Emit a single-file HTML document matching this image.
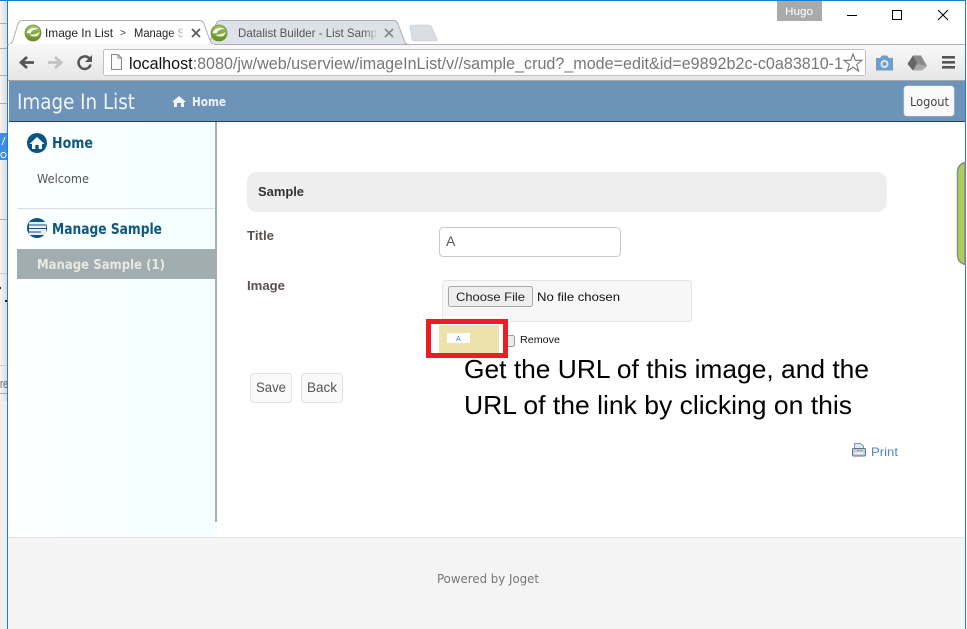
<!DOCTYPE html>
<html>
<head>
<meta charset="utf-8">
<title>Image In List</title>
<style>
html,body{margin:0;padding:0;background:#fff;width:967px;height:629px;overflow:hidden}
svg{display:block}
text{font-family:"Liberation Sans",sans-serif;white-space:pre}
.d{font-family:"DejaVu Sans",sans-serif}
</style>
</head>
<body>
<svg width="967" height="629" viewBox="0 0 967 629" xmlns="http://www.w3.org/2000/svg">
<defs>
<linearGradient id="strip" x1="0" x2="1" y1="0" y2="0"><stop offset="0" stop-color="#f6f6f6"/><stop offset="1" stop-color="#d8d8d8"/></linearGradient>
<linearGradient id="tool" x1="0" x2="0" y1="0" y2="1"><stop offset="0" stop-color="#f8f8f8"/><stop offset="1" stop-color="#e6e6e6"/></linearGradient>
<linearGradient id="side" x1="0" x2="1" y1="0" y2="0"><stop offset="0" stop-color="#ffffff"/><stop offset=".3" stop-color="#f8ffff"/><stop offset="1" stop-color="#f5ffff"/></linearGradient>
<linearGradient id="fade" x1="0" x2="1" y1="0" y2="0"><stop offset="0" stop-color="#fff" stop-opacity="0"/><stop offset="1" stop-color="#fff"/></linearGradient>
<linearGradient id="fade2" x1="0" x2="1" y1="0" y2="0"><stop offset="0" stop-color="#dde1e8" stop-opacity="0"/><stop offset="1" stop-color="#dde1e8"/></linearGradient>
<linearGradient id="fav" x1="0" x2="0" y1="0" y2="1"><stop offset="0" stop-color="#a9c46a"/><stop offset="1" stop-color="#5f8f1e"/></linearGradient>
<clipPath id="c1"><rect x="45" y="22" width="138" height="20"/></clipPath>
<clipPath id="c2"><rect x="238" y="22" width="138" height="20"/></clipPath>
</defs>

<!-- left desktop strip -->
<rect x="0" y="0" width="8" height="629" fill="url(#strip)"/>
<g fill="#ababab">
<rect x="0" y="23" width="7" height="1"/><rect x="0" y="48" width="7" height="1"/><rect x="0" y="75" width="7" height="1"/><rect x="0" y="103" width="7" height="1"/>
<rect x="0" y="219" width="7" height="1"/><rect x="0" y="273" width="7" height="1" fill="#ccc"/><rect x="0" y="365" width="7" height="1" fill="#ccc"/><rect x="0" y="393" width="7" height="1"/>
</g>
<rect x="0" y="133" width="7" height="27" fill="#3a8ee6"/>
<path d="M2 145L5 137" stroke="#fff" stroke-width="1" fill="none"/>
<circle cx="3.500" cy="155" r="2.600" stroke="#fff" stroke-width="1" fill="none"/>
<rect x="0" y="287" width="1" height="2" fill="#222"/>
<rect x="5" y="300" width="2" height="2" fill="#222"/>
<text x="0" y="388" font-size="13" fill="#666" textLength="8" lengthAdjust="spacingAndGlyphs">re</text>
<rect x="0" y="401" width="7" height="228" fill="#efefef"/>

<!-- window -->
<rect x="8" y="0" width="959" height="629" fill="#fff"/>
<rect x="0" y="0" width="967" height="1" fill="#1a7fd0"/>
<rect x="7" y="0" width="1" height="629" fill="#1a7fd0"/>
<rect x="965" y="0" width="1" height="629" fill="#1a7fd0"/>
<rect x="966" y="0" width="1" height="629" fill="#fff"/>

<!-- tabstrip -->
<rect x="8" y="44" width="957" height="1" fill="#b4b4b4"/>
<path d="M205 44.500C209 44.500 210 42 212 36L216 24C217 21.500 218 20.500 221 20.500L393 20.500C396 20.500 397 21.500 398 24L404 40C405 43 406 44.500 409 44.500Z" fill="#dde1e8" stroke="#a9acb2"/>
<path d="M8 44.500C11 44.500 12 43 13 40L18 24C19 21.500 20 20.500 23 20.500L199 20.500C202 20.500 203 21.500 204 24L210 40C211 43 212 44.500 215 44.500L215 45L8 45Z" fill="#fff" stroke="#a9acb2"/>
<rect x="9" y="44" width="205" height="2" fill="#f8f8f8"/>
<path d="M410 27C410 25.500 411 25 412 25L428 25C430 25 431 26 431.500 27L437 39C437.500 40.500 437 41 435 41L415 41C413 41 412 40.500 412 39Z" fill="#d9dde4" stroke="#c4c7cc" stroke-width=".6"/>

<!-- favicons -->
<g>
<circle cx="33" cy="33" r="8" fill="url(#fav)" stroke="#6b8a3a" stroke-width=".8"/>
<path d="M26.500 33C28 28.500 34 26.500 38.500 29C34.500 29 31.500 30.500 30.500 33.500Z" fill="#fff"/>
<path d="M29.500 34.500C33 35 36 34 40 32C39 33.500 38.500 35 37.500 36C34 37 31 36.500 29.500 34.500Z" fill="#f2f7e2"/>
</g>
<g>
<circle cx="219" cy="33" r="8" fill="url(#fav)" stroke="#6b8a3a" stroke-width=".8"/>
<path d="M212.500 33C214 28.500 220 26.500 224.500 29C220.500 29 217.500 30.500 216.500 33.500Z" fill="#fff"/>
<path d="M215.500 34.500C219 35 222 34 226 32C225 33.500 224.500 35 223.500 36C220 37 217 36.500 215.500 34.500Z" fill="#f2f7e2"/>
</g>

<!-- tab titles -->
<g clip-path="url(#c1)">
<text x="45" y="37" font-size="12" fill="#222" textLength="68" lengthAdjust="spacingAndGlyphs">Image In List</text>
<text x="120" y="36" font-size="10" fill="#333">&gt;</text>
<text x="134" y="37" font-size="12" fill="#222" textLength="51" lengthAdjust="spacingAndGlyphs">Manage S</text>
</g>
<rect x="170" y="22" width="16" height="20" fill="url(#fade)"/>
<g clip-path="url(#c2)">
<text x="238" y="37" font-size="12" fill="#555" textLength="139" lengthAdjust="spacingAndGlyphs">Datalist Builder - List Samp</text>
</g>
<rect x="364" y="22" width="14" height="20" fill="url(#fade2)"/>
<path d="M192 29L200 37M200 29L192 37" stroke="#5a5a5a" stroke-width="1.800"/>
<path d="M385 29L393 37M393 29L385 37" stroke="#8a8a8a" stroke-width="1.800"/>

<!-- user badge and window buttons -->
<rect x="777" y="1" width="45" height="20" fill="#aaaaaa"/>
<text x="785" y="15" font-size="11" fill="#fff" textLength="28" lengthAdjust="spacingAndGlyphs">Hugo</text>
<rect x="847" y="15" width="10" height="1" fill="#000"/>
<rect x="892.500" y="10.500" width="9" height="9" fill="none" stroke="#000" stroke-width="1"/>
<path d="M938 10L948 20M948 10L938 20" stroke="#000" stroke-width="1"/>

<!-- toolbar -->
<rect x="8" y="45" width="957" height="35" fill="url(#tool)"/>
<rect x="8" y="80" width="957" height="1" fill="#a5a5a5"/>
<path d="M34 62.500L22 62.500M27 57L21 62.500L27 68" stroke="#555" stroke-width="2.800" fill="none"/>
<path d="M48 62.500L60 62.500M55 57L61 62.500L55 68" stroke="#c2c2c2" stroke-width="2.800" fill="none"/>
<path d="M90.500 60C89 57 86 56 84 56.500C80.500 57 78.500 60 78.500 62.500C78.500 66 81.500 69 84.500 69C87.500 69 90 67 90.500 64.500" stroke="#555" stroke-width="2.500" fill="none"/>
<path d="M92 55L92 62L85 62Z" fill="#555"/>
<rect x="103.500" y="49.500" width="762" height="26" rx="2" fill="#fff" stroke="#c0c0c0"/>
<path d="M111.500 54.500L118 54.500L121.500 58L121.500 69.500L111.500 69.500Z" fill="#fafafa" stroke="#888"/>
<path d="M118 54.500L118 58L121.500 58" fill="none" stroke="#888"/>
<text x="129" y="69" font-size="17" fill="#777" textLength="714" lengthAdjust="spacingAndGlyphs"><tspan fill="#111">localhost</tspan>:8080/jw/web/userview/imageInList/v//sample_crud?_mode=edit&amp;id=e9892b2c-c0a83810-1</text>
<rect x="843" y="50" width="22" height="25" fill="#fff"/>
<path d="M853 54L855.300 60.300L862 60.300L856.700 64.500L858.600 71L853 67.200L847.400 71L849.300 64.500L844 60.300L850.700 60.300Z" fill="#fff" stroke="#777" stroke-width="1.100"/>
<path d="M876 58L880 58L882 55.500L887 55.500L889 58L893 58L893 70.500L876 70.500Z" fill="#6f9fc7"/>
<circle cx="884.500" cy="64" r="4" fill="#dbe8f2"/><circle cx="884.500" cy="64" r="2" fill="#6f9fc7"/>
<path d="M913 55.500L921 55.500L927 66L922 70.500L913 70.500L907.500 64Z" fill="#8a8a8a"/>
<path d="M913 55.500L917 63L913 70.500L907.500 64Z" fill="#666"/>
<path d="M917 64L927 66L922 70.500L913 70.500Z" fill="#aaa"/>
<rect x="942" y="56" width="13" height="2.600" fill="#555"/><rect x="942" y="61" width="13" height="2.600" fill="#555"/><rect x="942" y="66" width="13" height="2.600" fill="#555"/>

<!-- app header -->
<rect x="9" y="81" width="956" height="40" fill="#6e93b8"/>
<rect x="9" y="121" width="956" height="1" fill="#2f4254"/>
<rect x="9" y="122" width="956" height="2" fill="#f6f6f6"/>
<text class="d" x="17" y="109" font-size="21" fill="#f1f5f9" textLength="118" lengthAdjust="spacingAndGlyphs">Image In List</text>
<path d="M172 102L179 96L186 102L184 102L184 107L181 107L181 103L177 103L177 107L174 107L174 102Z" fill="#f3f6f9"/>
<text class="d" x="192" y="106" font-size="12.500" font-weight="700" fill="#eef2f6" textLength="34" lengthAdjust="spacingAndGlyphs">Home</text>
<rect x="904" y="86" width="50" height="30" rx="3" fill="#f9f9f9" stroke="#dfe5ea" stroke-width=".6"/>
<text class="d" x="910" y="106" font-size="12.500" fill="#444" textLength="39" lengthAdjust="spacingAndGlyphs">Logout</text>

<!-- sidebar -->
<rect x="9" y="124" width="208" height="413" fill="url(#side)"/>
<rect x="215" y="122" width="2" height="400" fill="#9fb0b4"/>
<circle cx="37" cy="143" r="10" fill="#0b5484"/>
<path d="M29.500 144L37 137L44.500 144L42 144L42 149L38.700 149L38.700 145L35.300 145L35.300 149L32 149L32 144Z" fill="#fff"/>
<text class="d" x="52" y="148" font-size="15" font-weight="700" fill="#115682" textLength="41" lengthAdjust="spacingAndGlyphs">Home</text>
<text class="d" x="37" y="183" font-size="12" fill="#555" textLength="52" lengthAdjust="spacingAndGlyphs">Welcome</text>
<rect x="17" y="208" width="198" height="1" fill="#dcdcdc"/>
<circle cx="37" cy="228" r="10" fill="#0b5484"/>
<rect x="29" y="222" width="17" height="13" rx="1" fill="#e8f0f5"/>
<path d="M29 225H46M29 228.500H46M29 232H41" stroke="#0b5484" stroke-width="1"/>
<text class="d" x="52" y="234" font-size="15" font-weight="700" fill="#115682" textLength="110" lengthAdjust="spacingAndGlyphs">Manage Sample</text>
<rect x="17" y="249" width="200" height="30" fill="#a0aeb1"/>
<text class="d" x="37" y="269" font-size="13.500" font-weight="700" fill="#e9e9dd" textLength="128" lengthAdjust="spacingAndGlyphs">Manage Sample (1)</text>

<!-- form -->
<rect x="247" y="172" width="640" height="40" rx="10" fill="#eeeeee"/>
<text x="258" y="196" font-size="12.500" font-weight="700" fill="#333" textLength="46" lengthAdjust="spacingAndGlyphs">Sample</text>
<text x="247" y="240" font-size="12.500" font-weight="700" fill="#5a5050" textLength="27" lengthAdjust="spacingAndGlyphs">Title</text>
<rect x="439.500" y="227.500" width="181" height="29" rx="4" fill="#fff" stroke="#c8c8c8"/>
<text x="446" y="246" font-size="14" fill="#555">A</text>
<text x="247" y="290" font-size="12.500" font-weight="700" fill="#5a5050" textLength="38" lengthAdjust="spacingAndGlyphs">Image</text>
<rect x="442.500" y="280.500" width="249" height="41" rx="3" fill="#f7f7f7" stroke="#e6e6e6"/>
<rect x="448.500" y="286.500" width="84" height="20" rx="2" fill="#eeeeee" stroke="#a8a8a8"/>
<text x="456" y="301" font-size="12" fill="#222" textLength="69" lengthAdjust="spacingAndGlyphs">Choose File</text>
<text x="537" y="301" font-size="12" fill="#111" textLength="83" lengthAdjust="spacingAndGlyphs">No file chosen</text>

<!-- thumbnail with highlight -->
<rect x="505.500" y="335.500" width="9" height="11" rx="2" fill="#ececec" stroke="#9a9a9a"/>
<rect x="428.500" y="321.500" width="77" height="34" fill="#fff" stroke="#ed1c24" stroke-width="5"/>
<rect x="439" y="325" width="60" height="28" fill="#ede2ab"/>
<rect x="447" y="333" width="23" height="10" fill="#fff"/>
<text x="456" y="341" font-size="7" fill="#2a8aa0">A</text>
<text x="520" y="343" font-size="10.500" fill="#111" textLength="40" lengthAdjust="spacingAndGlyphs">Remove</text>

<!-- annotation -->
<text x="464" y="378" font-size="26" fill="#000" textLength="405" lengthAdjust="spacingAndGlyphs">Get the URL of this image, and the</text>
<text x="464" y="414" font-size="26" fill="#000" textLength="388" lengthAdjust="spacingAndGlyphs">URL of the link by clicking on this</text>

<!-- buttons -->
<rect x="250.500" y="373.500" width="41" height="29" rx="3" fill="#f9f9f9" stroke="#e2e2e2"/>
<text x="256" y="392" font-size="14" fill="#555" textLength="30" lengthAdjust="spacingAndGlyphs">Save</text>
<rect x="301.500" y="373.500" width="41" height="29" rx="3" fill="#f9f9f9" stroke="#e2e2e2"/>
<text x="307" y="392" font-size="14" fill="#555" textLength="30" lengthAdjust="spacingAndGlyphs">Back</text>

<!-- print -->
<path d="M854.500 449L854.500 443.500L860.500 443.500L863.500 446L863.500 449Z" fill="#dfe9f3" stroke="#7f96ae"/>
<rect x="852.500" y="448.500" width="13" height="7.500" rx="1" fill="#c3d0dc" stroke="#5f7388"/>
<rect x="854.500" y="452.500" width="9" height="1.500" fill="#eef2f6"/>
<rect x="860" y="450" width="2" height="1" fill="#6aa84f"/>
<rect x="857" y="450" width="2" height="1" fill="#d66"/>
<text x="871" y="456" font-size="12" fill="#4a86c8" textLength="27" lengthAdjust="spacingAndGlyphs">Print</text>

<!-- green side tab -->
<path d="M965 162.500C960 164 957.500 167 957.500 172L957.500 255C957.500 260 960 263 965 264.500Z" fill="#a9cf55" stroke="#8a8a8a" stroke-width="1.500"/>

<!-- footer -->
<rect x="8" y="537" width="957" height="92" fill="#f4f4f4"/>
<rect x="8" y="537" width="957" height="1" fill="#e3e3e3"/>
<text class="d" x="437" y="583" font-size="12" fill="#777" textLength="102" lengthAdjust="spacingAndGlyphs">Powered by Joget</text>
</svg>
</body>
</html>
